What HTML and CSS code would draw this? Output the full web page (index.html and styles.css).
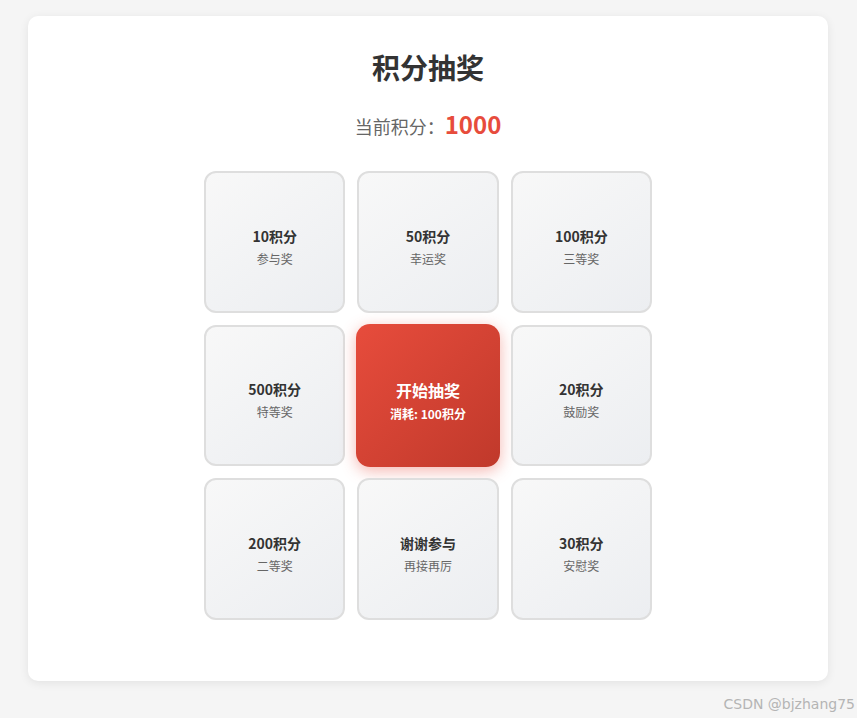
FILE: index.html
```html
<!DOCTYPE html>
<html lang="zh-CN">
<head>
<meta charset="UTF-8">
<title>积分抽奖</title>
<link rel="stylesheet" href="styles.css">
</head>
<body>
<div class="page">
  <div class="card">
    <h1 class="title">积分抽奖</h1>
    <div class="score">当前积分：<span class="score-num">1000</span></div>
    <div class="grid">
      <div class="cell"><div class="prize">10积分</div><div class="label">参与奖</div></div>
      <div class="cell"><div class="prize">50积分</div><div class="label">幸运奖</div></div>
      <div class="cell"><div class="prize">100积分</div><div class="label">三等奖</div></div>
      <div class="cell"><div class="prize">500积分</div><div class="label">特等奖</div></div>
      <div class="cell start"><div class="start-title">开始抽奖</div><div class="start-cost">消耗: 100积分</div></div>
      <div class="cell"><div class="prize">20积分</div><div class="label">鼓励奖</div></div>
      <div class="cell"><div class="prize">200积分</div><div class="label">二等奖</div></div>
      <div class="cell"><div class="prize">谢谢参与</div><div class="label">再接再厉</div></div>
      <div class="cell"><div class="prize">30积分</div><div class="label">安慰奖</div></div>
    </div>
  </div>
  <div class="watermark">CSDN @bjzhang75</div>
</div>
</body>
</html>
```
FILE: styles.css
```css
* { box-sizing: border-box; }
html, body {
  margin: 0;
  padding: 0;
  background: #f5f5f5;
  font-family: "Noto Sans CJK SC", "Noto Sans", sans-serif;
}
.page {
  position: relative;
  width: 857px;
  height: 718px;
  padding: 16px 29px 0 28px;
}
.card {
  width: 800px;
  height: 665px;
  background: #fff;
  border-radius: 10px;
  box-shadow: 0 2px 10px rgba(0,0,0,0.08);
  padding: 30px 0;
  display: flex;
  flex-direction: column;
  align-items: center;
}
.title {
  margin: 0;
  font-size: 28px;
  line-height: 42px;
  font-weight: 700;
  color: #333;
}
.score {
  margin-top: 18px;
  height: 36px;
  line-height: 36px;
  font-size: 18px;
  color: #666;
  display: flex;
  align-items: baseline;
}
.score-num {
  font-size: 24px;
  font-weight: 700;
  color: #e74c3c;
}
.grid {
  margin-top: 29px;
  display: grid;
  grid-template-columns: repeat(3, 141.33px);
  grid-auto-rows: 141.5px;
  gap: 12px;
}
.cell {
  border: 2px solid #dedede;
  border-radius: 12px;
  background: linear-gradient(145deg, #f8f8f8, #eceef1);
  display: flex;
  flex-direction: column;
  align-items: center;
  justify-content: center;
  gap: 4px;
  padding-top: 10px;
}
.prize {
  font-size: 14px;
  font-weight: 700;
  color: #333;
  line-height: 20px;
}
.label {
  font-size: 12px;
  color: #666;
  line-height: 18px;
}
.start {
  border: none;
  margin: -1px;
  border-radius: 14px;
  background: linear-gradient(135deg, #e74c3c, #c0392b);
  box-shadow: 0 4px 15px rgba(231,76,60,0.4);
  gap: 4px;
  padding-top: 12px;
}
.start-title {
  font-size: 16px;
  font-weight: 700;
  color: #fff;
  line-height: 22px;
}
.start-cost {
  font-size: 12px;
  font-weight: 700;
  color: #fff;
  line-height: 18px;
}
.watermark {
  position: absolute;
  right: 2px;
  bottom: 6px;
  font-family: "DejaVu Sans", sans-serif;
  font-size: 14px;
  color: #b4b4b4;
}
```
